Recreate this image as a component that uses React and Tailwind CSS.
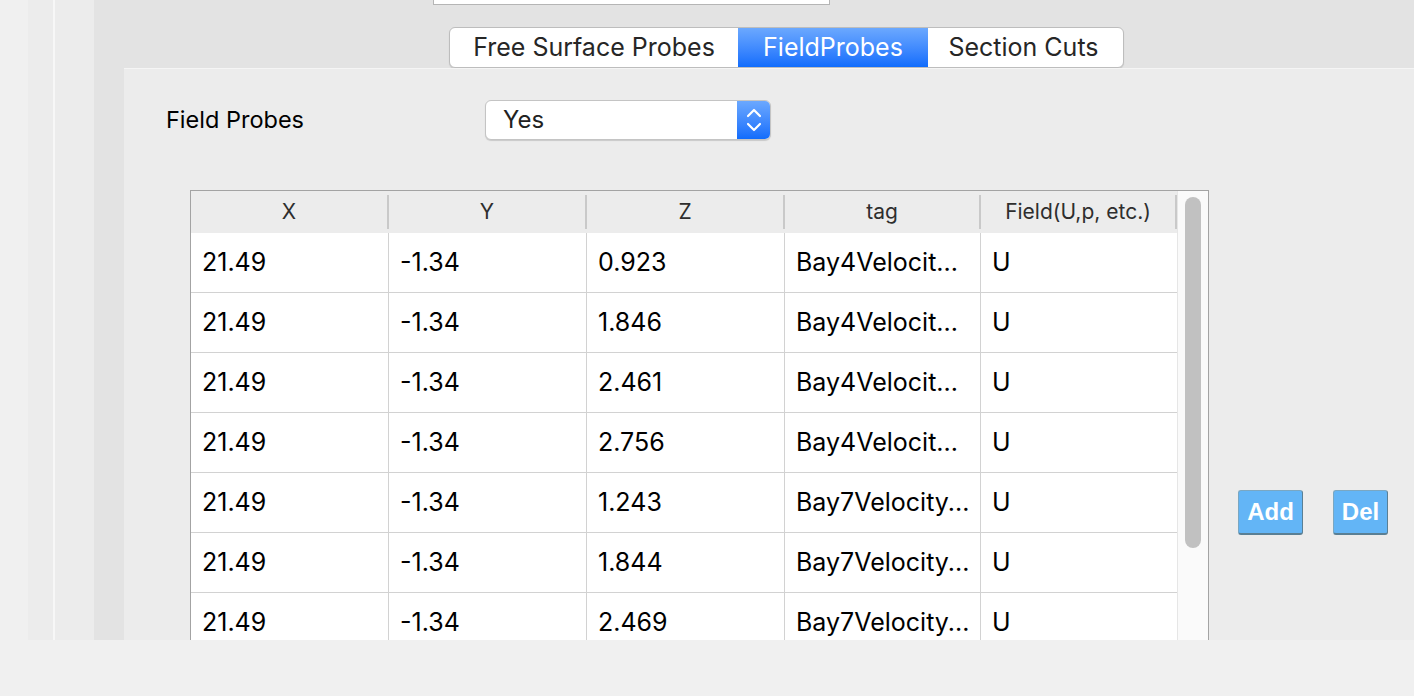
import React from "react";

const rows = [
  ["21.49", "-1.34", "0.923", "Bay4Velocit...", "U"],
  ["21.49", "-1.34", "1.846", "Bay4Velocit...", "U"],
  ["21.49", "-1.34", "2.461", "Bay4Velocit...", "U"],
  ["21.49", "-1.34", "2.756", "Bay4Velocit...", "U"],
  ["21.49", "-1.34", "1.243", "Bay7Velocity...", "U"],
  ["21.49", "-1.34", "1.844", "Bay7Velocity...", "U"],
  ["21.49", "-1.34", "2.469", "Bay7Velocity...", "U"],
];

const headers = ["X", "Y", "Z", "tag", "Field(U,p, etc.)"];
const widths = ["w-[198px]", "w-[198px]", "w-[198px]", "w-[196px]", "w-[196px]"];

export default function App() {
  return (
    <div
      className="w-[1414px] h-[696px] bg-[#f0f0f0] flex flex-col overflow-hidden"
      style={{ fontFamily: "Inter, 'Noto Sans', sans-serif" }}
    >
      <div className="h-[640px] flex flex-row overflow-hidden">
        <div className="w-[28px] bg-[#f0f0f0]" />
        <div className="w-[25px] bg-[#ececec]" />
        <div className="w-[2px] bg-[#f7f7f7]" />
        <div className="w-[39px] bg-[#ececec]" />
        <div className="flex-1 bg-[#e3e3e3] flex flex-col">
          {/* top strip with tabs */}
          <div className="h-[68px] flex flex-col shrink-0">
            <div className="ml-[339px] w-[397px] h-[5px] bg-white border-x border-b border-[#b5b5b5]" />
            <div className="ml-[355px] mt-[22px] h-[41px] flex flex-row rounded-[6px] border border-[#bdbdbd] bg-white w-[675px] overflow-hidden shadow-[0_1px_1px_rgba(0,0,0,0.12)] text-[25px] text-[#262626]">
              <div className="w-[288px] flex items-center justify-center">Free Surface Probes</div>
              <div className="w-[190px] flex items-center justify-center text-white bg-gradient-to-b from-[#6ba8fe] to-[#0f6cfc]">
                FieldProbes
              </div>
              <div className="flex-1 flex items-center justify-center pr-[4px]">Section Cuts</div>
            </div>
          </div>
          <div className="flex-1 flex flex-row">
            <div className="w-[30px]" />
            <div className="flex-1 bg-[#ececec] border-t border-[#f5f5f5] flex flex-col">
              {/* Field Probes row */}
              <div className="mt-[31px] flex flex-row items-center pl-[42px]">
                <div className="w-[319px] text-[23.5px] text-black">Field Probes</div>
                <div className="w-[286px] h-[40px] flex flex-row rounded-[6px] bg-white border border-[#c4c4c4] shadow-[0_1px_1px_rgba(0,0,0,0.15)] overflow-hidden">
                  <div className="flex-1 flex items-center pl-[17px] text-[24px] text-[#222]">Yes</div>
                  <div className="w-[33px] bg-gradient-to-b from-[#6ba8fe] to-[#0f6cfc] flex items-center justify-center">
                    <svg width="18" height="28" viewBox="0 0 18 28" fill="none" stroke="white" strokeWidth="2.2" strokeLinecap="round" strokeLinejoin="round">
                      <path d="M3 10 L9 4 L15 10" />
                      <path d="M3 18 L9 24 L15 18" />
                    </svg>
                  </div>
                </div>
              </div>

              {/* table + buttons */}
              <div className="mt-[50px] pl-[66px] flex flex-row items-start">
                <div className="w-[1019px] border border-[#a3a3a3] flex flex-row bg-white">
                  <div className="w-[986px] flex flex-col">
                    <div className="h-[42px] bg-[#ececec] flex flex-row">
                      {headers.map((h, i) => (
                        <div key={h} className={`${widths[i]} flex flex-row items-center`}>
                          <div className="flex-1 text-center text-[21px] text-[#2e2e2e]">{h}</div>
                          <div className="w-[2px] h-[34px] bg-[#c9c9c9]" />
                        </div>
                      ))}
                    </div>
                    {rows.map((r, ri) => (
                      <div key={ri} className="h-[60px] flex flex-row border-b border-[#d2d2d2]">
                        {r.map((c, ci) => (
                          <div
                            key={ci}
                            className={`${widths[ci]} flex items-center pl-[11px] text-[25px] text-black whitespace-nowrap overflow-hidden ${ci < 4 ? "border-r border-[#d2d2d2]" : ""}`}
                          >
                            {c}
                          </div>
                        ))}
                      </div>
                    ))}
                  </div>
                  <div className="w-[31px] bg-[#fafafa] border-l border-[#e6e6e6] flex flex-col items-center pt-[6px]">
                    <div className="w-[16px] h-[351px] rounded-full bg-[#c1c1c1]" />
                  </div>
                </div>
                <div className="ml-[29px] mt-[300px] flex flex-row gap-[30px]">
                  <div className="w-[65px] h-[45px] rounded-[3px] bg-[#63b5f6] border border-[#7aa7c2] border-r-[#5a7f94] border-b-[#5a7f94] border-b-2 flex items-center justify-center text-white font-bold text-[24px]" style={{ fontFamily: "'Liberation Sans', Arial, sans-serif" }}>
                    Add
                  </div>
                  <div className="w-[55px] h-[45px] rounded-[3px] bg-[#63b5f6] border border-[#7aa7c2] border-r-[#5a7f94] border-b-[#5a7f94] border-b-2 flex items-center justify-center text-white font-bold text-[24px]" style={{ fontFamily: "'Liberation Sans', Arial, sans-serif" }}>
                    Del
                  </div>
                </div>
              </div>
            </div>
          </div>
        </div>
      </div>
    </div>
  );
}
